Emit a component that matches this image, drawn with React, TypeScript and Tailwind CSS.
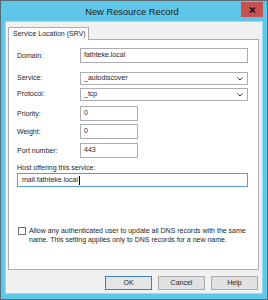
import React from 'react';

const font = { fontFamily: '"Liberation Sans", Arial, sans-serif' };

function Field({ label, value, width, select }: { label: string; value: string; width: string; select?: boolean }) {
  return (
    <div className="flex items-center">
      <span className="w-[63px] text-[7px] leading-[9px] text-[#1e1e1e]">{label}</span>
      <div
        className={`flex h-[15px] items-center justify-between border border-[#abadb3] bg-white pl-[3px] pr-[4px] text-[7px] text-[#1e1e1e] ${width}`}
      >
        <span>{value}</span>
        {select && (
          <svg width="6" height="4" viewBox="0 0 6 4">
            <path d="M0.5 0.5 L3 3 L5.5 0.5" stroke="#333" strokeWidth="1" fill="none" />
          </svg>
        )}
      </div>
    </div>
  );
}

export default function App() {
  return (
    <div style={font} className="flex h-[300px] w-[268px] flex-col border border-[#5a6b73] bg-[#5fc6e8]">
      {/* title bar */}
      <div className="flex h-[20px] shrink-0 items-start">
        <div className="w-[22px]" />
        <div className="flex-1 pt-[6px] text-center text-[9.3px] leading-[11px] text-[#1b1b1b]">New Resource Record</div>
        <div className="mr-[4px] mt-[1px] flex h-[15px] w-[22px] items-center justify-center bg-[#c75050]">
          <svg width="7" height="6" viewBox="0 0 7 6">
            <path d="M1 0.5 L6 5.5 M6 0.5 L1 5.5" stroke="#1a1a1a" strokeWidth="1.6" />
          </svg>
        </div>
      </div>

      {/* body */}
      <div className="mx-[4px] mb-[5px] flex flex-1 flex-col border border-[#9fd9ee] bg-[#f0f0f0] pl-[2px] pr-[3px] pt-[5px] pb-[2px]">
        {/* tab */}
        <div className="flex">
          <div className="relative z-10 -mb-px flex h-[13px] w-[81px] items-center border border-b-0 border-[#acacac] bg-white pl-[4px] text-[7px] text-[#1e1e1e]">
            Service Location (SRV)
          </div>
        </div>
        {/* panel */}
        <div className="flex h-[231px] flex-col border border-[#acacac] bg-white px-[8px] pt-[8px]">
          <Field label="Domain:" value="fathteke.local" width="w-[168px]" />
          <div className="mt-[9px]">
            <div className="flex items-center">
              <span className="w-[63px] text-[7px] text-[#1e1e1e]">Service:</span>
              <div className="flex h-[13px] w-[168px] items-center justify-between border border-[#abadb3] bg-white pl-[3px] pr-[4px] text-[7px] text-[#1e1e1e]">
                <span>_autodiscover</span>
                <svg width="6" height="4" viewBox="0 0 6 4">
                  <path d="M0.5 0.5 L3 3 L5.5 0.5" stroke="#333" strokeWidth="1" fill="none" />
                </svg>
              </div>
            </div>
          </div>
          <div className="mt-[3px]">
            <div className="flex items-center">
              <span className="w-[63px] text-[7px] text-[#1e1e1e]">Protocol:</span>
              <div className="flex h-[13px] w-[168px] items-center justify-between border border-[#abadb3] bg-white pl-[3px] pr-[4px] text-[7px] text-[#1e1e1e]">
                <span>_tcp</span>
                <svg width="6" height="4" viewBox="0 0 6 4">
                  <path d="M0.5 0.5 L3 3 L5.5 0.5" stroke="#333" strokeWidth="1" fill="none" />
                </svg>
              </div>
            </div>
          </div>
          <div className="mt-[5px]">
            <Field label="Priority:" value="0" width="w-[58px]" />
          </div>
          <div className="mt-[3px]">
            <Field label="Weight:" value="0" width="w-[58px]" />
          </div>
          <div className="mt-[4px]">
            <Field label="Port number:" value="443" width="w-[58px]" />
          </div>
          <div className="mt-[5px] text-[7px] leading-[9px] text-[#1e1e1e]">Host offering this service:</div>
          <div className="mt-[1px] flex h-[14px] w-[231px] items-center border border-[#569de5] bg-white pl-[4px] text-[7px] text-[#1e1e1e]">
            mail.fathteke.local
            <span className="ml-px h-[9px] w-px bg-black" />
          </div>
          <div className="mt-[39px] flex items-start gap-[3px] pl-px">
            <div className="mt-px h-[8px] w-[8px] shrink-0 border border-[#707070] bg-white" />
            <p className="text-[7px] leading-[9px] text-[#1e1e1e]">
              Allow any authenticated user to update all DNS records with the same name. This setting applies only to DNS records for a new name.
            </p>
          </div>
        </div>
        {/* buttons */}
        <div className="mt-[6px] flex justify-end gap-[6px] pr-[1px]">
          <button className="h-[14px] w-[47px] border border-[#3c7fb1] bg-[#e5e5e5] text-[7px] text-[#1e1e1e]">OK</button>
          <button className="h-[14px] w-[47px] border border-[#acacac] bg-[#e1e1e1] text-[7px] text-[#1e1e1e]">Cancel</button>
          <button className="h-[14px] w-[47px] border border-[#acacac] bg-[#e1e1e1] text-[7px] text-[#1e1e1e]">Help</button>
        </div>
      </div>
    </div>
  );
}
